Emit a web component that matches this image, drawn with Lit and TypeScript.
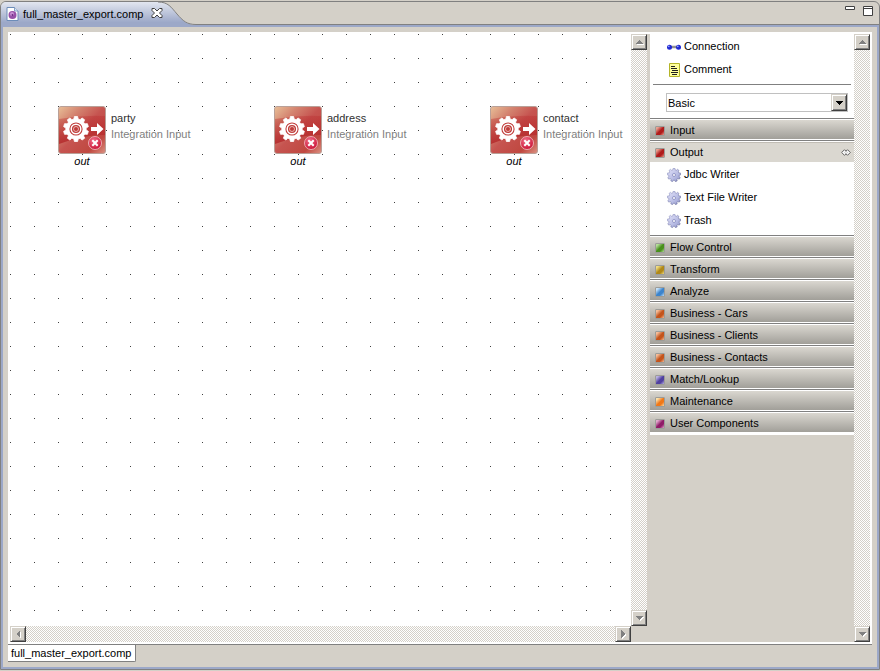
import { LitElement, html, css, svg } from "lit";
import { customElement } from "lit/decorators.js";
import { styleMap } from "lit/directives/style-map.js";

interface FlowNode { name: string; kind: string; port: string; x: number; y: number }
interface Drawer { name: string; light: string; dark: string; items?: string[] }

const NODES: FlowNode[] = [
  { name: "party", kind: "Integration Input", port: "out", x: 48, y: 72 },
  { name: "address", kind: "Integration Input", port: "out", x: 264, y: 72 },
  { name: "contact", kind: "Integration Input", port: "out", x: 480, y: 72 },
];

const DRAWERS: Drawer[] = [
  { name: "Input", light: "#e8a090", dark: "#b01c1c" },
  { name: "Output", light: "#e8a090", dark: "#b01c1c", items: ["Jdbc Writer", "Text File Writer", "Trash"] },
  { name: "Flow Control", light: "#b4dc98", dark: "#48901c" },
  { name: "Transform", light: "#f0dc80", dark: "#b08818" },
  { name: "Analyze", light: "#c4e0f8", dark: "#3c84cc" },
  { name: "Business - Cars", light: "#f4bc98", dark: "#c4541c" },
  { name: "Business - Clients", light: "#f4bc98", dark: "#c4541c" },
  { name: "Business - Contacts", light: "#f4bc98", dark: "#c4541c" },
  { name: "Match/Lookup", light: "#b8b0e0", dark: "#5040a0" },
  { name: "Maintenance", light: "#fce0a8", dark: "#f07818" },
  { name: "User Components", light: "#e0a8cc", dark: "#901c68" },
];

/** Outline of a toothed wheel around (cx, cy). */
function gearPath(cx: number, cy: number, outer: number, inner: number, teeth: number): string {
  const pts: string[] = [];
  const step = (Math.PI * 2) / teeth;
  for (let i = 0; i < teeth; i++) {
    const a = i * step - Math.PI / 2;
    for (const [r, off] of [[inner, -0.34], [outer, -0.2], [outer, 0.2], [inner, 0.34]]) {
      const t = a + off * step;
      pts.push(`${(cx + r * Math.cos(t)).toFixed(2)} ${(cy + r * Math.sin(t)).toFixed(2)}`);
    }
  }
  return `M${pts.join("L")}Z`;
}

const NODE_GEAR = gearPath(18, 23, 12.6, 10.2, 10);
const SMALL_GEAR = gearPath(7, 7, 6.7, 5.2, 9);

const nodeIcon = html`<svg class="node-icon" viewBox="0 0 48 48" aria-hidden="true">${svg`
  <defs>
    <linearGradient id="base" x1="0" y1="0" x2="1" y2="1">
      <stop offset="0" stop-color="#e8c098"/><stop offset=".25" stop-color="#d48470"/>
      <stop offset=".5" stop-color="#c65450"/><stop offset=".8" stop-color="#c04840"/><stop offset="1" stop-color="#dc9484"/>
    </linearGradient>
    <linearGradient id="shade" x1="0" y1="0" x2="0" y2="1">
      <stop offset="0" stop-color="#b82428" stop-opacity=".3"/><stop offset="1" stop-color="#b02024" stop-opacity=".75"/>
    </linearGradient>
    <radialGradient id="badge" cx=".4" cy=".3" r=".75">
      <stop offset="0" stop-color="#f07088"/><stop offset="1" stop-color="#c80c30"/>
    </radialGradient>
  </defs>
  <rect x=".5" y=".5" width="47" height="47" rx="2.5" fill="url(#base)" stroke="#b9a098"/>
  <path d="M1 13Q24 9 47 10V29Q24 29 1 38Z" fill="url(#shade)"/>
  <path d=${NODE_GEAR} fill="#fff" stroke="#fff" stroke-width=".8" stroke-linejoin="round"/>
  <circle cx="18" cy="23" r="6.6" fill="#c03c3a"/>
  <circle cx="18" cy="23" r="4.8" fill="none" stroke="#fff" stroke-width="1.5"/>
  <circle cx="18" cy="23" r="2.5" fill="#c03c3a" stroke="#f0d0cc" stroke-width=".8"/>
  <path d="M33 21H39V17L45.5 23L39 29V25H33Z" fill="#fff"/>
  <circle cx="37" cy="37" r="6.5" fill="url(#badge)" stroke="#f0b4bc" stroke-width=".9"/>
  <path d="M34.3 34.3L39.7 39.7M39.7 34.3L34.3 39.7" stroke="#fff" stroke-width="2"/>`}</svg>`;

const smallGear = html`<svg width="14" height="14" viewBox="0 0 14 14" aria-hidden="true">${svg`
  <defs><linearGradient id="metal" x1="0" y1="0" x2="1" y2="1">
    <stop offset="0" stop-color="#e4e4fa"/><stop offset=".6" stop-color="#b8bce4"/><stop offset="1" stop-color="#9094c8"/>
  </linearGradient>
  <linearGradient id="rim" x1="0" y1="0" x2="1" y2="1">
    <stop offset="0" stop-color="#9ca0cc"/><stop offset="1" stop-color="#505488"/>
  </linearGradient></defs>
  <path d=${SMALL_GEAR} fill="url(#metal)" stroke="url(#rim)" stroke-width=".6" stroke-linejoin="round"/>
  <circle cx="7" cy="7" r="1.5" fill="#fff" stroke="#8488bc" stroke-width=".8"/>`}</svg>`;

@customElement("scroll-strip")
export class ScrollStrip extends LitElement {
  static properties = { horizontal: { type: Boolean, reflect: true } };
  declare horizontal: boolean;

  static styles = css`
    :host {
      display: flex; flex-direction: column; justify-content: space-between;
      width: 16px;
      background: repeating-conic-gradient(#fff 0 25%, #d4d0c8 0 50%) 0 0 / 2px 2px;
    }
    :host([horizontal]) { flex-direction: row; width: auto; height: 16px; }
    .arrow {
      box-sizing: border-box; width: 16px; height: 16px; padding: 0;
      display: grid; place-items: center;
      background: #d4d0c8;
      border: 1px solid; border-color: #d4d0c8 #404040 #404040 #d4d0c8;
      box-shadow: inset 1px 1px #fff, inset -1px -1px #808080;
    }
    .icon { display: block; width: 9px; height: 9px; }
  `;

  private arrow(label: string, d: string) {
    return html`<button class="arrow" aria-label=${label}>
      <svg class="icon" viewBox="0 0 9 9" shape-rendering="crispEdges">
        <path d=${d} fill="#fff" transform="translate(1 1)" /><path d=${d} fill="#808080" />
      </svg></button>`;
  }

  render() {
    return this.horizontal
      ? html`${this.arrow("Scroll left", "M6 0V8L2 4Z")}${this.arrow("Scroll right", "M2 0V8L6 4Z")}`
      : html`${this.arrow("Scroll up", "M0 6H8L4 2Z")}${this.arrow("Scroll down", "M0 2H8L4 6Z")}`;
  }
}

@customElement("tool-palette")
export class ToolPalette extends LitElement {
  static styles = css`
    :host { display: block; background: #d4d0c8; }
    .sheet { background: #fff; padding-bottom: 2px; }
    .tools { padding: 1px 0 3px; margin: 0 3px; border-bottom: 1px solid #808080; }
    .entry {
      display: grid; grid-template-columns: 14px 1fr; align-items: center; gap: 3px;
      width: 100%; height: 23px; padding: 0 0 0 17px;
      border: 0; background: none; color: #000; font: inherit; text-align: left;
    }
    .tools .entry { padding-left: 14px; }
    .entry svg { display: block; }
    .picker { position: relative; height: 19px; margin: 8px 6px 6px 16px; }
    .select {
      appearance: none; box-sizing: border-box; display: block; width: 100%; height: 19px;
      padding: 2px 18px 0 1px; margin: 0; border: 1px solid #c0c0c0; border-radius: 0;
      background: #fff; color: #000; font: inherit;
    }
    .drop {
      position: absolute; top: 1px; right: 1px; bottom: 1px; width: 16px; box-sizing: border-box;
      display: grid; place-items: center; pointer-events: none; background: #d4d0c8;
      border: 1px solid; border-color: #d4d0c8 #404040 #404040 #d4d0c8;
      box-shadow: inset 1px 1px #fff, inset -1px -1px #808080;
    }
    .drawer { border-top: 1px solid #808080; }
    .head {
      box-sizing: border-box; display: flex; align-items: center; gap: 5px;
      width: 100%; height: 21px; padding: 2px 3px 0 5px; margin: 0;
      border: solid #fff; border-width: 1px 0;
      background: linear-gradient(#dad7d0, #a19f99) padding-box; color: #000; font: inherit; text-align: left;
    }
    .title { flex: 1; }
    .head.open { background: #dad7d0 padding-box; border-bottom-color: #dad7d0; box-shadow: inset 0 1px #c0bcb4; }
    .items { padding: 1px 0 3px; }
    .swatch {
      box-sizing: border-box; width: 10px; height: 10px; border: 1px solid #9c9c98; border-radius: 1px;
    }
  `;

  private drawer(d: Drawer) {
    const swatch = styleMap({ background: `linear-gradient(135deg, ${d.light} 15%, ${d.dark} 50%, ${d.dark} 70%, ${d.light})` });
    return html`<section class="drawer">
      <button class="head ${d.items ? "open" : ""}" aria-expanded=${d.items ? "true" : "false"}>
        <span class="swatch" style=${swatch}></span><span class="title">${d.name}</span>
        ${d.items ? html`<svg width="10" height="7" viewBox="0 0 10 7" aria-hidden="true">
          <path d="M.7 3.5L3.5 .7L5 2.2L6.5 .7L9.3 3.5L6.5 6.3L5 4.8L3.5 6.3Z" fill="#fff" stroke="#606060" />
          <path d="M5 2.2L3.7 3.5L5 4.8L6.3 3.5Z" fill="#fff" stroke="#909090" stroke-width=".6" /></svg>` : null}
      </button>
      ${d.items ? html`<div class="items">${d.items.map((t) => html`<button class="entry">${smallGear}<span>${t}</span></button>`)}</div>` : null}
    </section>`;
  }

  render() {
    return html`<div class="sheet">
      <div class="tools">
        <button class="entry">
          <svg width="14" height="14" viewBox="0 0 14 14" aria-hidden="true">
            <path d="M4 7H10" stroke="#909090" stroke-width="2.4" />
            <circle cx="2.5" cy="7.2" r="2.5" fill="#2028d0" /><circle cx="11.5" cy="7.2" r="2.5" fill="#2028d0" />
            <circle cx="1.8" cy="6.3" r=".9" fill="#90a0ff" /><circle cx="10.8" cy="6.3" r=".9" fill="#90a0ff" />
          </svg><span>Connection</span>
        </button>
        <button class="entry">
          <svg width="14" height="14" viewBox="0 0 14 14" aria-hidden="true">
            <path d="M2.5 .5H12.5V13.5H2.5Z" fill="#ffff9c" stroke="#b4b428" />
            <path d="M4 3.5H8M4 5.5H10M5 7.5H11M4 9.5H11M5 11.5H10" stroke="#202020" shape-rendering="crispEdges" />
          </svg><span>Comment</span>
        </button>
      </div>
      <div class="picker">
        <select class="select" aria-label="Palette level"><option>Basic</option></select>
        <span class="drop"><svg width="7" height="4" viewBox="0 0 7 4" shape-rendering="crispEdges"><path d="M0 0H7L3.5 4Z" /></svg></span>
      </div>
      ${DRAWERS.map((d) => this.drawer(d))}
    </div>`;
  }
}

@customElement("app-root")
export class AppRoot extends LitElement {
  static styles = css`
    :host {
      display: flex; flex-direction: column; box-sizing: border-box; min-height: 100vh;
      padding: 1px 0; background: #d4d0c8; color: #000;
      font: 11px/13px "Liberation Sans", Arial, sans-serif;
    }
    .window {
      flex: 1; display: flex; flex-direction: column; overflow: hidden;
      border: 1px solid #808080; border-radius: 6px 6px 0 0;
    }
    .bar { display: flex; height: 23px; }
    .tab {
      position: relative; display: flex; align-items: center; gap: 4px;
      box-sizing: border-box; width: 195px; height: 24px; padding: 0 0 0 5px; z-index: 1;
    }
    .shape { position: absolute; inset: 0; z-index: -1; }
    .tab-name { padding: 0; border: 0; background: none; color: inherit; font: inherit; white-space: nowrap; }
    .close, .win { display: grid; padding: 0; border: 0; background: none; }
    .close { margin-left: 4px; }
    .tools {
      flex: 1; display: flex; justify-content: flex-end; align-items: flex-start; gap: 7px;
      padding: 4px 6px 0 0; border-bottom: 1px solid #808080;
    }
    .body {
      flex: 1; display: flex; flex-direction: column;
      border: 2px solid #9ca8c8; padding: 5px;
    }
    .frame {
      flex: 1; display: grid; grid-template-columns: minmax(0, 1fr) 16px 3px 204px 16px;
      grid-template-rows: minmax(0, 1fr) 16px;
      grid-template-areas: "canvas vbar gap palette pbar" "hbar corner gap palette pbar";
      padding: 2px; background: #fff; border-bottom: 1px solid #808080;
    }
    .canvas {
      grid-area: canvas; position: relative; overflow: hidden;
      background:
        linear-gradient(to right, transparent 1px, #fff 1px) 0 0 / 24px 24px,
        linear-gradient(to bottom, #404040 1px, #fff 1px) 0 0 / 24px 24px;
    }
    .vbar { grid-area: vbar; }
    .hbar { grid-area: hbar; }
    .gap { grid-area: gap; background: #d4d0c8; }
    .palette { grid-area: palette; }
    .pbar { grid-area: pbar; }
    .corner { grid-area: corner; background: #d4d0c8; }
    .node { position: absolute; display: grid; grid-template-columns: 48px auto; gap: 1px 5px; }
    .node-icon { display: block; width: 48px; height: 48px; }
    .caption { padding-top: 4px; line-height: 16px; white-space: nowrap; color: #303030; }
    .kind { color: #808080; }
    .port { text-align: center; font-style: italic; }
    .pages { display: flex; height: 17px; }
    .page {
      box-sizing: border-box; height: 17px; padding: 0 4px 0 3px; margin: 0; white-space: nowrap;
      background: #fff; border: solid #808080; border-width: 0 1px 1px 0; border-radius: 0 0 2px 0;
      color: #000; font: inherit;
    }
  `;

  render() {
    return html`<main class="window">
      <header class="bar">
        <div class="tab">
          <svg class="shape" width="195" height="24" viewBox="0 0 195 24" aria-hidden="true">
            <defs><linearGradient id="sky" x1="0" y1="0" x2="0" y2="1">
              <stop offset="0" stop-color="#e2e6f0" /><stop offset=".85" stop-color="#9ca8c8" /></linearGradient></defs>
            <path d="M0 0H157C167 0 170 5 176 12C182 19 186 22.500 194 23H195V24H0Z" fill="url(#sky)" />
            <path d="M157 0C167 0 170 5 176 12C182 19 186 22.500 195 22.500" fill="none" stroke="#808080" />
          </svg>
          <svg width="13" height="14" viewBox="0 0 13 14" aria-hidden="true">
            <path d="M1 .5H8.500L12 4V13.500H1Z" fill="#fff" stroke="#6c8cb8" />
            <path d="M8.500 .5V4H12" fill="#dce8f4" stroke="#6c8cb8" stroke-width=".8" />
            <circle cx="6.500" cy="8" r="4" fill="#9850a8" /><circle cx="6" cy="7" r="2" fill="#c890d4" />
            <circle cx="6.500" cy="8" r=".9" fill="#6c2880" />
          </svg>
          <button class="tab-name">full_master_export.comp</button>
          <button class="close" aria-label="Close">
            <svg width="12" height="12" viewBox="0 0 12 12">
              <path d="M1 .5H3.500L6 3L8.500 .5H11V2.500L8.500 5L11 7.500V9.500H8.500L6 7L3.500 9.500H1V7.500L3.500 5L1 2.500Z" fill="#fff" stroke="#404040" />
            </svg>
          </button>
        </div>
        <div class="tools">
          <button class="win" aria-label="Minimize"><svg width="11" height="11" viewBox="0 0 11 11">
            <path d="M.5 .5H9.500V3.500H.5Z" fill="#fff" stroke="#404040" /></svg></button>
          <button class="win" aria-label="Maximize"><svg width="10" height="10" viewBox="0 0 10 10">
            <path d="M.5 .5H9.500V9.500H.5ZM.5 2.500H9.500" fill="#fff" stroke="#404040" /></svg></button>
        </div>
      </header>
      <div class="body">
        <div class="frame">
          <div class="canvas">
            ${NODES.map((n) => html`<div class="node" style=${styleMap({ left: `${n.x}px`, top: `${n.y}px` })}>
              ${nodeIcon}
              <div class="caption"><div>${n.name}</div><div class="kind">${n.kind}</div></div>
              <div class="port">${n.port}</div>
            </div>`)}
          </div>
          <scroll-strip class="vbar"></scroll-strip>
          <div class="gap"></div>
          <tool-palette class="palette"></tool-palette>
          <scroll-strip class="pbar"></scroll-strip>
          <scroll-strip class="hbar" horizontal></scroll-strip>
          <div class="corner"></div>
        </div>
        <nav class="pages"><button class="page">full_master_export.comp</button></nav>
      </div>
    </main>`;
  }
}
